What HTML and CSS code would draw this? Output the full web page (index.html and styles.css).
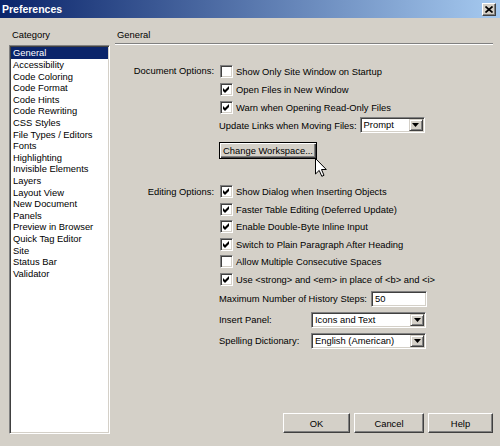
FILE: index.html
```html
<!DOCTYPE html>
<html>
<head>
<meta charset="utf-8">
<title>Preferences</title>
<link rel="stylesheet" href="styles.css">
</head>
<body>
<div class="window">
  <div class="titlebar">
    <span class="title">Preferences</span>
    <span class="close"><svg width="8" height="7" viewBox="0 0 8 7"><path d="M0.5 0.5 L7.5 6.5 M7.5 0.5 L0.5 6.5" stroke="#000" stroke-width="1.7" fill="none"/></svg></span>
  </div>
  <div class="body">
    <div class="sidebar">
      <div class="cat-label">Category</div>
      <ul class="listbox">
        <li class="selected">General</li>
        <li>Accessibility</li>
        <li>Code Coloring</li>
        <li>Code Format</li>
        <li>Code Hints</li>
        <li>Code Rewriting</li>
        <li>CSS Styles</li>
        <li>File Types / Editors</li>
        <li>Fonts</li>
        <li>Highlighting</li>
        <li>Invisible Elements</li>
        <li>Layers</li>
        <li>Layout View</li>
        <li>New Document</li>
        <li>Panels</li>
        <li>Preview in Browser</li>
        <li>Quick Tag Editor</li>
        <li>Site</li>
        <li>Status Bar</li>
        <li>Validator</li>
      </ul>
    </div>
    <div class="main">
      <div class="panel-title">General</div>
      <div class="sep"></div>

      <div class="section doc">
        <div class="sec-label">Document Options:</div>
        <div class="sec-body">
          <div class="cb-row"><span class="cb"></span><span>Show Only Site Window on Startup</span></div>
          <div class="cb-row"><span class="cb"><svg width="9" height="9" viewBox="0 0 9 9"><polygon points="1,3 3,5 7,1 7,4 3,8 1,6" fill="#000"/></svg></span><span>Open Files in New Window</span></div>
          <div class="cb-row"><span class="cb"><svg width="9" height="9" viewBox="0 0 9 9"><polygon points="1,3 3,5 7,1 7,4 3,8 1,6" fill="#000"/></svg></span><span>Warn when Opening Read-Only Files</span></div>
          <div class="field-row">
            <span class="field-label">Update Links when Moving Files:</span>
            <span class="select sel-prompt"><span class="sel-text">Prompt</span><span class="dd"><svg width="7" height="4" viewBox="0 0 7 4"><polygon points="0,0 7,0 3.5,4" fill="#000"/></svg></span></span>
          </div>
          <div class="btn-row">
            <span class="btn default">Change Workspace...</span>
            <svg class="cursor" width="12" height="19" viewBox="0 0 12 19"><path d="M0.5 0.5 L0.5 16 L4.2 12.4 L6.8 18.3 L9 17.3 L6.5 11.5 L11.3 11.5 Z" fill="#fff" stroke="#000" stroke-width="1" stroke-linejoin="miter"/></svg>
          </div>
        </div>
      </div>

      <div class="section edit">
        <div class="sec-label">Editing Options:</div>
        <div class="sec-body">
          <div class="cb-row"><span class="cb"><svg width="9" height="9" viewBox="0 0 9 9"><polygon points="1,3 3,5 7,1 7,4 3,8 1,6" fill="#000"/></svg></span><span>Show Dialog when Inserting Objects</span></div>
          <div class="cb-row"><span class="cb"><svg width="9" height="9" viewBox="0 0 9 9"><polygon points="1,3 3,5 7,1 7,4 3,8 1,6" fill="#000"/></svg></span><span>Faster Table Editing (Deferred Update)</span></div>
          <div class="cb-row"><span class="cb"><svg width="9" height="9" viewBox="0 0 9 9"><polygon points="1,3 3,5 7,1 7,4 3,8 1,6" fill="#000"/></svg></span><span>Enable Double-Byte Inline Input</span></div>
          <div class="cb-row"><span class="cb"><svg width="9" height="9" viewBox="0 0 9 9"><polygon points="1,3 3,5 7,1 7,4 3,8 1,6" fill="#000"/></svg></span><span>Switch to Plain Paragraph After Heading</span></div>
          <div class="cb-row"><span class="cb"></span><span>Allow Multiple Consecutive Spaces</span></div>
          <div class="cb-row"><span class="cb"><svg width="9" height="9" viewBox="0 0 9 9"><polygon points="1,3 3,5 7,1 7,4 3,8 1,6" fill="#000"/></svg></span><span>Use &lt;strong&gt; and &lt;em&gt; in place of &lt;b&gt; and &lt;i&gt;</span></div>
          <div class="field-row tall">
            <span class="field-label">Maximum Number of History Steps:</span>
            <span class="textbox"><span class="sel-text">50</span></span>
          </div>
          <div class="field-row tall">
            <span class="field-label fixed">Insert Panel:</span>
            <span class="select sel-wide"><span class="sel-text">Icons and Text</span><span class="dd"><svg width="7" height="4" viewBox="0 0 7 4"><polygon points="0,0 7,0 3.5,4" fill="#000"/></svg></span></span>
          </div>
          <div class="field-row tall">
            <span class="field-label fixed">Spelling Dictionary:</span>
            <span class="select sel-wide"><span class="sel-text">English (American)</span><span class="dd"><svg width="7" height="4" viewBox="0 0 7 4"><polygon points="0,0 7,0 3.5,4" fill="#000"/></svg></span></span>
          </div>
        </div>
      </div>

      <div class="footer">
        <span class="btn foot">OK</span>
        <span class="btn foot cancel">Cancel</span>
        <span class="btn foot help">Help</span>
      </div>
    </div>
  </div>
</div>
</body>
</html>
```
FILE: styles.css
```css
* { box-sizing: border-box; }
html, body {
  margin: 0;
  padding: 0;
  width: 500px;
  height: 446px;
  overflow: hidden;
  background: #d4d0c8;
}
body {
  font-family: "Liberation Sans", Arial, sans-serif;
  font-size: 9.4px;
  color: #000;
}
.window {
  width: 500px;
  height: 446px;
  display: flex;
  flex-direction: column;
  background: #d4d0c8;
}
.titlebar {
  height: 18px;
  flex: none;
  display: flex;
  align-items: center;
  justify-content: space-between;
  padding: 0 4px 0 2px;
  background: linear-gradient(to right, #0a246a, #a6caf0);
}
.title {
  color: #fff;
  font-weight: bold;
  font-size: 10.5px;
}
.close {
  width: 14px;
  height: 13px;
  display: flex;
  align-items: center;
  justify-content: center;
  background: #d4d0c8;
  border: 1px solid;
  border-color: #fff #404040 #404040 #fff;
  box-shadow: inset -1px -1px 0 #808080;
}
.body {
  flex: 1;
  display: flex;
  padding-left: 9px;
}
.sidebar {
  width: 101px;
  flex: none;
  display: flex;
  flex-direction: column;
  padding-bottom: 12px;
}
.cat-label {
  margin-top: 10px;
  line-height: 14px;
  padding-left: 3px;
}
.listbox {
  list-style: none;
  margin: 3px 0 0 0;
  padding: 1px;
  flex: 1;
  background: #fff;
  border: 1px solid;
  border-color: #808080 #fff #fff #808080;
  box-shadow: inset 1px 1px 0 #404040, inset -1px -1px 0 #d4d0c8;
}
.listbox li {
  line-height: 11.6px;
  height: 11.6px;
  padding-left: 2px;
  white-space: nowrap;
}
.listbox li.selected {
  background: #0a246a;
  color: #fff;
  height: 12px;
  line-height: 12px;
}
.main {
  flex: 1;
  display: flex;
  flex-direction: column;
  margin-left: 5px;
  padding-right: 7px;
}
.panel-title {
  margin-top: 10px;
  line-height: 14px;
  padding-left: 2px;
}
.sep {
  margin-top: 1px;
  height: 2px;
  border-top: 1px solid #808080;
  border-bottom: 1px solid #fff;
}
.section {
  display: grid;
  grid-template-columns: 104px 1fr;
}
.section.doc { margin-top: 17px; }
.section.edit { margin-top: 24px; }
.sec-label {
  text-align: right;
  padding-right: 5px;
  line-height: 18px;
  white-space: nowrap;
}
.section.edit .sec-label { line-height: 17.5px; }
.sec-body {
  display: flex;
  flex-direction: column;
}
.cb-row {
  height: 18px;
  display: flex;
  align-items: center;
  white-space: nowrap;
}
.section.edit .cb-row { height: 17.5px; }
.cb {
  width: 13px;
  height: 13px;
  margin-left: 1px;
  margin-right: 3px;
  flex: none;
  background: #fff;
  border: 1px solid;
  border-color: #808080 #fff #fff #808080;
  box-shadow: inset 1px 1px 0 #404040, inset -1px -1px 0 #d4d0c8;
  display: flex;
  align-items: center;
  justify-content: center;
}
.cb svg { display: block; }
.field-row {
  height: 18px;
  display: flex;
  align-items: center;
  white-space: nowrap;
}
.field-row.tall { height: 21px; }
.field-label { margin-right: 3px; }
.field-label.fixed { width: 92px; margin-right: 0; }
.select, .textbox {
  height: 16px;
  display: flex;
  align-items: center;
  background: #fff;
  border: 1px solid;
  border-color: #808080 #fff #fff #808080;
  box-shadow: inset 1px 1px 0 #404040, inset -1px -1px 0 #d4d0c8;
  padding: 1px;
}
.sel-text {
  flex: 1;
  padding-left: 2px;
  line-height: 12px;
}
.sel-prompt { width: 65px; }
.sel-wide { width: 115px; }
.textbox { width: 56px; margin-left: 1px; }
.dd {
  width: 14px;
  height: 12px;
  flex: none;
  display: flex;
  align-items: center;
  justify-content: center;
  background: #d4d0c8;
  border: 1px solid;
  border-color: #d4d0c8 #404040 #404040 #d4d0c8;
  box-shadow: inset 1px 1px 0 #fff, inset -1px -1px 0 #808080;
}
.dd svg { display: block; }
.btn-row {
  position: relative;
  margin-top: 8px;
  height: 17px;
  display: flex;
}
.btn {
  display: flex;
  align-items: center;
  justify-content: center;
  background: #d4d0c8;
  border: 1px solid;
  border-color: #fff #404040 #404040 #fff;
  box-shadow: inset -1px -1px 0 #808080;
  white-space: nowrap;
}
.btn.default {
  width: 98px;
  height: 17px;
  border: 1px solid #000;
  box-shadow: inset 1px 1px 0 #fff, inset -1px -1px 0 #404040, inset -2px -2px 0 #808080;
}
.cursor {
  position: absolute;
  left: 96px;
  top: 16px;
}
.footer {
  margin-top: auto;
  margin-bottom: 13px;
  display: flex;
  justify-content: flex-end;
  gap: 4px;
}
.btn.foot {
  width: 67px;
  height: 20px;
}
.btn.cancel { width: 70px; }
.btn.help { width: 65px; }
```
